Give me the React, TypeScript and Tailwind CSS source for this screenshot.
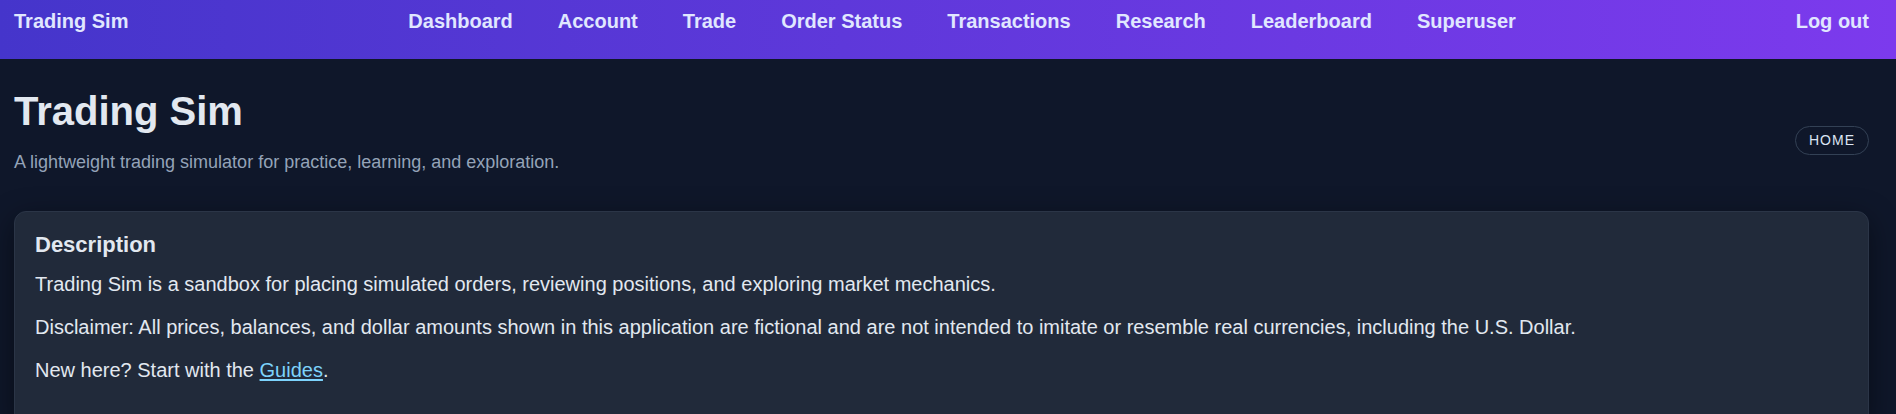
const navLinks = [
  'Dashboard',
  'Account',
  'Trade',
  'Order Status',
  'Transactions',
  'Research',
  'Leaderboard',
  'Superuser',
];

function NavBar() {
  return (
    <nav className="h-[59px] bg-linear-to-r from-[#4535cb] to-[#7c3aed] pl-[14px] pr-[27px] pt-[7px] flex items-start justify-between text-[20px] leading-[28px] font-bold text-[#e0e7ff]">
      <a href="#" className="whitespace-nowrap">Trading Sim</a>
      <div className="flex items-start gap-[45px]">
        {navLinks.map((link) => (
          <a key={link} href="#" className="whitespace-nowrap">
            {link}
          </a>
        ))}
      </div>
      <a href="#" className="whitespace-nowrap">Log out</a>
    </nav>
  );
}

export default function App() {
  return (
    <div
      className="min-h-[414px] bg-[#0f172a] text-[#e2e8f0]"
      style={{ fontFamily: '"Liberation Sans", Arial, sans-serif' }}
    >
      <NavBar />
      <main className="pl-[14px] pr-[27px] pt-[28px] pb-10">
        <div className="flex items-start justify-between">
          <div>
            <h1 className="text-[40px] leading-[48px] font-bold text-[#e2e8f0]">Trading Sim</h1>
            <p className="mt-[14px] text-[18px] leading-[27px] text-[#94a3b8]">
              A lightweight trading simulator for practice, learning, and exploration.
            </p>
          </div>
          <span className="mt-[39px] h-[29px] px-[13px] flex items-center rounded-full border border-[#334155] text-[14px] tracking-[1px] text-[#dbe4f3]">
            HOME
          </span>
        </div>

        <section className="mt-[35px] rounded-[12px] border border-[#2b3547] bg-[#212a3a] px-[20px] pt-[20px] pb-[40px] shadow-[0_8px_30px_rgba(0,0,0,0.45)]">
          <h2 className="text-[22px] leading-[26px] font-bold text-[#e2e8f0] mb-[11px]">Description</h2>
          <div className="text-[20px] leading-[30px] text-[#e2e8f0] flex flex-col gap-[13px]">
            <p>
              Trading Sim is a sandbox for placing simulated orders, reviewing positions, and exploring market mechanics.
            </p>
            <p>
              Disclaimer: All prices, balances, and dollar amounts shown in this application are fictional and are not
              intended to imitate or resemble real currencies, including the U.S. Dollar.
            </p>
            <p>
              New here? Start with the{' '}
              <a href="#" className="text-[#7dd3fc] underline underline-offset-2">
                Guides
              </a>
              .
            </p>
          </div>
        </section>
      </main>
    </div>
  );
}
